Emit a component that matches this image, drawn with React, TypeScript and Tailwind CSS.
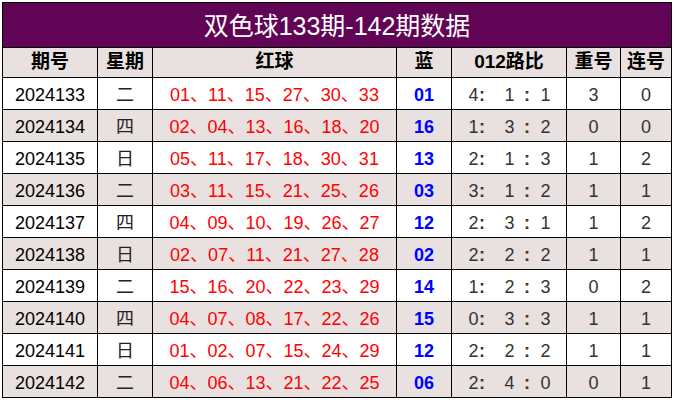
import * as React from "react";

type Row = {
  issue: string;
  week: string;
  reds: string[];
  blue: string;
  ratio: string;
  repeat: number;
  consec: number;
};

const rows: Row[] = [
  { issue: "2024133", week: "二", reds: ["01", "11", "15", "27", "30", "33"], blue: "01", ratio: "4:  1 : 1", repeat: 3, consec: 0 },
  { issue: "2024134", week: "四", reds: ["02", "04", "13", "16", "18", "20"], blue: "16", ratio: "1:  3 : 2", repeat: 0, consec: 0 },
  { issue: "2024135", week: "日", reds: ["05", "11", "17", "18", "30", "31"], blue: "13", ratio: "2:  1 : 3", repeat: 1, consec: 2 },
  { issue: "2024136", week: "二", reds: ["03", "11", "15", "21", "25", "26"], blue: "03", ratio: "3:  1 : 2", repeat: 1, consec: 1 },
  { issue: "2024137", week: "四", reds: ["04", "09", "10", "19", "26", "27"], blue: "12", ratio: "2:  3 : 1", repeat: 1, consec: 2 },
  { issue: "2024138", week: "日", reds: ["02", "07", "11", "21", "27", "28"], blue: "02", ratio: "2:  2 : 2", repeat: 1, consec: 1 },
  { issue: "2024139", week: "二", reds: ["15", "16", "20", "22", "23", "29"], blue: "14", ratio: "1:  2 : 3", repeat: 0, consec: 2 },
  { issue: "2024140", week: "四", reds: ["04", "07", "08", "17", "22", "26"], blue: "15", ratio: "0:  3 : 3", repeat: 1, consec: 1 },
  { issue: "2024141", week: "日", reds: ["01", "02", "07", "15", "24", "29"], blue: "12", ratio: "2:  2 : 2", repeat: 1, consec: 1 },
  { issue: "2024142", week: "二", reds: ["04", "06", "13", "21", "22", "25"], blue: "06", ratio: "2:  4 : 0", repeat: 0, consec: 1 },
];

const headers = ["期号", "星期", "红球", "蓝", "012路比", "重号", "连号"];

const font = { fontFamily: '"Liberation Sans", "Noto Sans CJK SC", sans-serif' };

// ratio column is laid on a fixed 9px pitch, like the source sheet
const Ratio: React.FC<{ text: string }> = ({ text }) => (
  <div className="flex">
    {text.split("").map((ch, i) => (
      <span
        key={i}
        className={`w-[9px] text-center ${ch === ":" ? "font-bold" : ""}`}
      >
        {ch === " " ? "\u00a0" : ch}
      </span>
    ))}
  </div>
);

export default function App() {
  const cell = "flex items-center justify-center border-r border-b border-black";
  const body = `${cell} h-[32px] pt-[4px] text-[18px]`;

  return (
    <div className="bg-white w-[676px] h-[402px] pt-[2px] pl-[2px]" style={font}>
      <div className="w-[670px] border-l border-t border-black">
        <div className="h-[45px] bg-[#610455] border-r border-b border-black flex items-center justify-center text-white text-[25px] pt-[4px]">
          双色球133期-142期数据
        </div>

        <div className="grid grid-cols-[95px_55px_244px_55px_115px_54px_51px]">
          {headers.map(h => (
            <div
              key={h}
              className={`${cell} h-[30px] bg-[#e9e1df] text-[19px] font-bold text-black`}
            >
              {h}
            </div>
          ))}

          {rows.map((r, idx) => {
            const bg = idx % 2 === 1 ? "bg-[#e9e1df]" : "bg-white";
            return (
              <React.Fragment key={r.issue}>
                <div className={`${body} ${bg} text-black`}>{r.issue}</div>
                <div className={`${body} ${bg} text-[#222]`}>{r.week}</div>
                <div className={`${body} ${bg} text-[#ff0000]`}>
                  {r.reds.join("、")}
                </div>
                <div className={`${body} ${bg} font-bold text-[#0000ff]`}>
                  {r.blue}
                </div>
                <div className={`${body} ${bg} text-[#333]`}>
                  <Ratio text={r.ratio} />
                </div>
                <div className={`${body} ${bg} text-[#333]`}>{r.repeat}</div>
                <div className={`${body} ${bg} text-[#333]`}>{r.consec}</div>
              </React.Fragment>
            );
          })}
        </div>
      </div>
    </div>
  );
}
